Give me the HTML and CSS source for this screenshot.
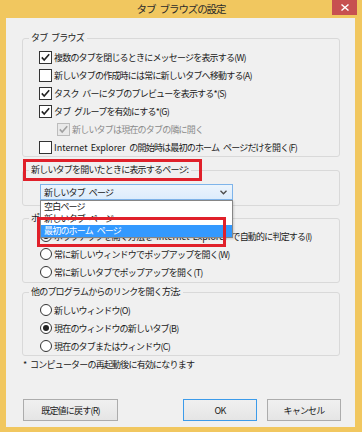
FILE: index.html
```html
<!DOCTYPE html>
<html lang="ja">
<head>
    <meta charset="UTF-8">
    <title>タブ ブラウズの設定</title>
    <link rel="stylesheet" href="styles.css">
</head>
<body>

<div class="window">
    <div class="titlebar">
        <span></span>
        <span class="title">タブ ブラウズの設定</span>
        <a class="close" href="#">
            <svg width="8" height="7" viewBox="0 0 8 7"><path d="M0.5 0.5 L7.5 6.5 M7.5 0.5 L0.5 6.5" stroke="#fff" stroke-width="1.4" fill="none"/></svg>
        </a>
    </div>

    <div class="frame">
        <div class="client">
            <fieldset class="group tabs">
                <legend>タブ ブラウズ</legend>
                <label class="row"><span class="check on"><svg width="11" height="11" viewBox="0 0 11 11"><path d="M1.8 5.4 L4.2 8 L9.2 2.2" stroke="#222" stroke-width="1.6" fill="none"/></svg></span>複数のタブを閉じるときにメッセージを表示する(W)</label>
                <label class="row"><span class="check"></span>新しいタブの作成時には常に新しいタブへ移動する(A)</label>
                <label class="row"><span class="check on"><svg width="11" height="11" viewBox="0 0 11 11"><path d="M1.8 5.4 L4.2 8 L9.2 2.2" stroke="#222" stroke-width="1.6" fill="none"/></svg></span>タスク バーにタブのプレビューを表示する*(S)</label>
                <label class="row"><span class="check on"><svg width="11" height="11" viewBox="0 0 11 11"><path d="M1.8 5.4 L4.2 8 L9.2 2.2" stroke="#222" stroke-width="1.6" fill="none"/></svg></span>タブ グループを有効にする*(G)</label>
                <label class="row sub disabled"><span class="check on"><svg width="11" height="11" viewBox="0 0 11 11"><path d="M1.8 5.4 L4.2 8 L9.2 2.2" stroke="#a0a0a0" stroke-width="1.6" fill="none"/></svg></span>新しいタブは現在のタブの隣に開く</label>
                <label class="row"><span class="check"></span><span class="en">Internet Explorer</span>&nbsp;の開始時は最初のホーム ページだけを開く(F)</label>
            </fieldset>

            <fieldset class="group newtab">
                <legend>新しいタブを開いたときに表示するページ:</legend>
                <div class="combo">
                    <div class="combo-box">
                        <span>新しいタブ ページ</span>
                        <svg width="7" height="5" viewBox="0 0 7 5"><path d="M0.5 0.8 L3.5 3.8 L6.5 0.8" stroke="#4a4a4a" stroke-width="1.3" fill="none"/></svg>
                    </div>
                    <ul class="combo-list">
                        <li>空白ページ</li>
                        <li>新しいタブ ページ</li>
                        <li class="active">最初のホーム ページ</li>
                    </ul>
                </div>
            </fieldset>

            <fieldset class="group popup">
                <legend>ポップアップの発生時:</legend>
                <label class="row"><span class="radio on"></span>ポップアップを開く方法を&nbsp;<span class="en">Internet Explorer</span>&nbsp;で自動的に判定する(I)</label>
                <label class="row"><span class="radio"></span>常に新しいウィンドウでポップアップを開く(W)</label>
                <label class="row"><span class="radio"></span>常に新しいタブでポップアップを開く(T)</label>
            </fieldset>

            <fieldset class="group links">
                <legend>他のプログラムからのリンクを開く方法:</legend>
                <label class="row"><span class="radio"></span>新しいウィンドウ(O)</label>
                <label class="row"><span class="radio on"></span>現在のウィンドウの新しいタブ(B)</label>
                <label class="row"><span class="radio"></span>現在のタブまたはウィンドウ(C)</label>
            </fieldset>

            <div class="note">* コンピューターの再起動後に有効になります</div>

            <div class="buttons">
                <a class="btn reset" href="#">既定値に戻す(R)</a>
                <a class="btn ok" href="#">OK</a>
                <a class="btn cancel" href="#">キャンセル</a>
            </div>

            <div class="mark mark-label"></div>
            <div class="mark mark-item"></div>
        </div>
    </div>
</div>

</body>
</html>
```

FILE: styles.css
```css
* {
    box-sizing: border-box;
}

html, body {
    margin: 0;
    padding: 0;
}

body {
    font-family: "Noto Sans CJK JP", "Liberation Sans", sans-serif;
    font-size: 9px;
    letter-spacing: -0.8px;
    word-spacing: 2.5px;
    color: #1a1a1a;
    background: #f1c75f;
}

a {
    text-decoration: none;
    color: inherit;
}

ul {
    margin: 0;
    padding: 0;
    list-style: none;
}

.en {
    letter-spacing: 0;
    word-spacing: 1px;
}

.window {
    width: 362px;
    height: 432px;
    display: flex;
    flex-direction: column;
    background: #f1c75f;
}

.titlebar {
    height: 18px;
    display: grid;
    grid-template-columns: 1fr auto 1fr;
    align-items: start;
}

.titlebar > .title {
    font-size: 10.5px;
    letter-spacing: -1.1px;
    word-spacing: 3px;
    line-height: 17px;
    color: #2b2b2b;
}

.titlebar > .close {
    justify-self: end;
    width: 25px;
    height: 15px;
    margin-right: 5px;
    background: #c75050;
    display: flex;
    align-items: center;
    justify-content: center;
}

.frame {
    flex: 1;
    display: flex;
    min-width: 0;
    padding: 0 7px 5px 6px;
}

.client {
    flex: 1;
    min-width: 0;
    position: relative;
    background: #f0f0f0;
    padding: 13px 15px 0 16px;
}

/* group boxes */

.group {
    margin: 0;
    padding: 0;
    border: 1px solid #d9d9d9;
    border-radius: 3px;
    min-width: 0;
}

.group > legend {
    margin-left: 6px;
    padding: 0 3px 0 2px;
    line-height: 14px;
}

.tabs {
    padding: 3px 0 0;
}

.newtab {
    margin-top: 6px;
    padding: 7px 0 5px;
}

.popup {
    margin-top: 5px;
    padding: 2px 0 1px;
}

.links {
    margin-top: 2px;
    padding: 2px 0 0;
}

.row {
    display: flex;
    align-items: center;
    height: 18px;
    padding-left: 16px;
    white-space: nowrap;
    overflow: hidden;
}

.row.sub {
    padding-left: 34px;
}

.row.disabled {
    color: #8a8a8a;
}

.check {
    flex: none;
    width: 13px;
    height: 13px;
    margin-right: 2px;
    border: 1px solid #333;
    background: #fff;
    display: flex;
    align-items: center;
    justify-content: center;
}

.disabled .check {
    border-color: #bcbcbc;
    background: #e9e9e9;
}

.radio {
    flex: none;
    width: 12px;
    height: 12px;
    margin: 0 2px 0 1px;
    border: 1px solid #333;
    border-radius: 50%;
    background: #fff;
    display: flex;
    align-items: center;
    justify-content: center;
}

.radio.on::after {
    content: '';
    width: 6px;
    height: 6px;
    border-radius: 50%;
    background: #222;
}

/* combo box with its open list */

.combo {
    position: relative;
    width: 193px;
    margin-left: 17px;
}

.combo-box {
    height: 16px;
    display: flex;
    align-items: center;
    justify-content: space-between;
    padding: 0 5px 0 3px;
    border: 1px solid #7eb4ea;
    background: linear-gradient(#ecf4fc, #dcecfc);
}

.combo-list {
    position: absolute;
    z-index: 2;
    top: 16px;
    left: 0;
    width: 193px;
    border: 1px solid #868686;
    background: #fff;
    box-shadow: 1px 1px 2px rgba(0, 0, 0, .15);
}

.combo-list > li {
    line-height: 12px;
    height: 12px;
    padding-left: 3px;
}

.combo-list > li.active {
    background: #3399ff;
    color: #fff;
}

.note {
    margin-top: 2px;
    padding-left: 1px;
    line-height: 14px;
}

.buttons {
    display: flex;
    margin: 27px -1px 0 1px;
}

.btn {
    height: 22px;
    display: flex;
    align-items: center;
    justify-content: center;
    border: 1px solid #acacac;
    background: linear-gradient(#f0f0f0, #e5e5e5);
}

.btn.reset {
    width: 95px;
}

.btn.ok {
    width: 74px;
    margin-left: auto;
    border-color: #3c9bea;
}

.btn.cancel {
    width: 74px;
    margin-left: 10px;
}

/* red highlight frames */

.mark {
    position: absolute;
    z-index: 3;
    border: 3px solid #e0202a;
}

.mark-label {
    left: 17px;
    top: 141px;
    width: 179px;
    height: 22px;
}

.mark-item {
    left: 31px;
    top: 199px;
    width: 189px;
    height: 30px;
}
```
